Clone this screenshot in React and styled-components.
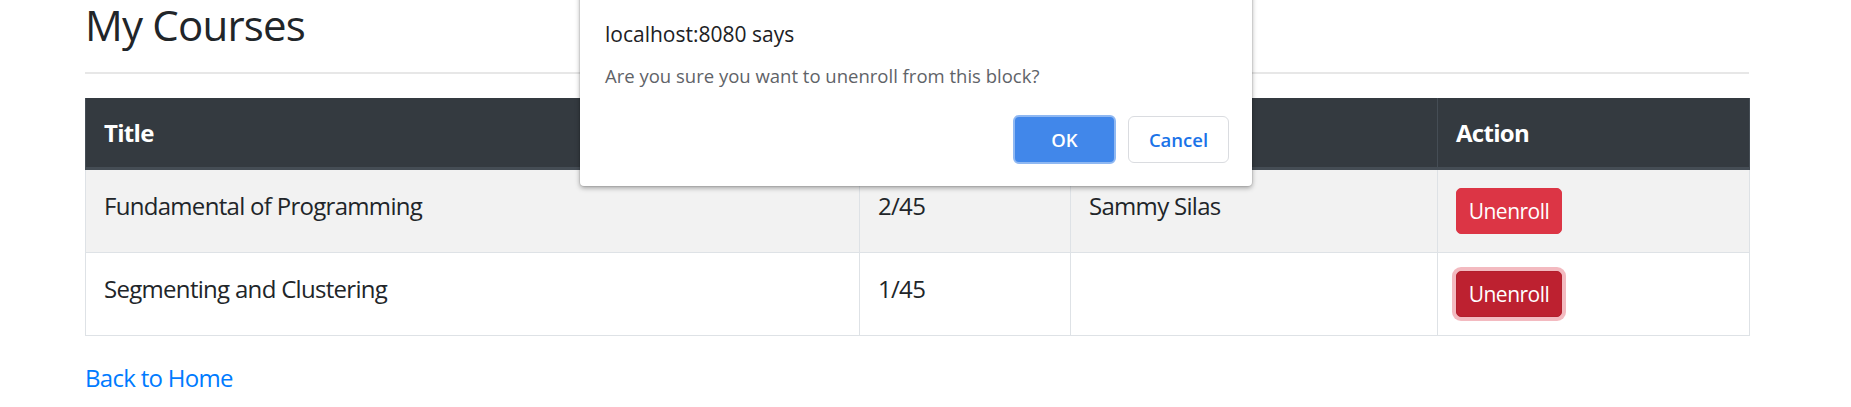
import React from "react";
import styled, { createGlobalStyle } from "styled-components";

const GlobalStyle = createGlobalStyle`
  html, body { margin: 0; padding: 0; background: #fff; }
  body {
    font-family: "Open Sans", "Noto Sans", sans-serif;
    color: #212529;
    font-size: 24px;
    line-height: 36px;
    letter-spacing: -0.7px;
  }
  * { box-sizing: border-box; }
`;

const Page = styled.div`
  width: 1851px;
  min-height: 407px;
  position: relative;
  overflow: hidden;
`;

const Container = styled.main`
  margin-left: 85px;
  width: 1664px;
  display: flex;
  flex-direction: column;
`;

const Heading = styled.h3`
  margin: 0;
  font-size: 42px;
  line-height: 50px;
  font-weight: 500;
  letter-spacing: -0.8px;
  color: #212529;
`;

const Divider = styled.hr`
  margin: 22px 0 24px;
  border: 0;
  height: 2px;
  background: #e7e7e7;
`;

const Table = styled.table`
  width: 100%;
  border-collapse: collapse;
  table-layout: fixed;
  margin-bottom: 24px;
`;

const HeadCell = styled.th`
  background: #343a40;
  color: #fff;
  font-weight: 700;
  text-align: left;
  padding: 18px;
  line-height: 33px;
  border-left: 1px solid #454d55;
  border-right: 1px solid #454d55;
  border-bottom: 3px solid #454d55;
  vertical-align: bottom;
`;

const Row = styled.tr`
  background: ${(p) => (p.$striped ? "#f2f2f2" : "#fff")};
`;

const Cell = styled.td`
  padding: 18px;
  border: 1px solid #dee2e6;
  vertical-align: top;
  line-height: 36px;
  height: 83px;
`;

const DangerButton = styled.button`
  display: inline-flex;
  align-items: center;
  justify-content: center;
  width: 106px;
  height: 46px;
  padding: 0 12px;
  font-family: inherit;
  font-size: 21px;
  line-height: 31px;
  letter-spacing: -0.5px;
  color: #fff;
  background: ${(p) => (p.$active ? "#bd2130" : "#dc3545")};
  border: 1.5px solid ${(p) => (p.$active ? "#b21f2d" : "#dc3545")};
  border-radius: 5px;
  box-shadow: ${(p) => (p.$active ? "0 0 0 4px rgba(225, 83, 97, 0.4)" : "none")};
  cursor: pointer;
`;

const BackLink = styled.a`
  color: #007bff;
  text-decoration: none;
  font-size: 24px;
  line-height: 36px;
  align-self: flex-start;
`;

const Dialog = styled.div`
  position: absolute;
  left: 580px;
  top: -10px;
  width: 672px;
  padding: 30px 23px 22px 25px;
  background: #fff;
  border-radius: 4px;
  letter-spacing: 0;
  box-shadow: 0 2px 5px rgba(0, 0, 0, 0.35), 0 0 0 1px rgba(0, 0, 0, 0.06);
  display: flex;
  flex-direction: column;
`;

const DialogTitle = styled.div`
  font-size: 21px;
  line-height: 28px;
  color: #202124;
`;

const DialogMessage = styled.div`
  margin-top: 15px;
  font-size: 18.5px;
  line-height: 26px;
  color: #5f6368;
`;

const DialogActions = styled.div`
  margin-top: 26px;
  display: flex;
  justify-content: flex-end;
  align-items: center;
  gap: 12px;
`;

const DialogButton = styled.button`
  font-family: inherit;
  font-size: 18.5px;
  font-weight: 600;
  border-radius: 6px;
  cursor: pointer;
  width: ${(p) => (p.$primary ? "103px" : "101px")};
  height: ${(p) => (p.$primary ? "49px" : "47px")};
  color: ${(p) => (p.$primary ? "#fff" : "#1a73e8")};
  background: ${(p) => (p.$primary ? "#4187ea" : "#fff")};
  border: ${(p) => (p.$primary ? "2px solid #8fb8f2" : "1.5px solid #dadce0")};
`;

const courses = [
  { title: "Fundamental of Programming", seats: "2/45", lecturer: "Sammy Silas" },
  { title: "Segmenting and Clustering", seats: "1/45", lecturer: "" },
];

export default function App() {
  return (
    <Page>
      <GlobalStyle />
      <Container>
        <Heading>My Courses</Heading>
        <Divider />
        <Table>
          <colgroup>
            <col style={{ width: 774 }} />
            <col style={{ width: 211 }} />
            <col style={{ width: 367 }} />
            <col style={{ width: 312 }} />
          </colgroup>
          <thead>
            <tr>
              <HeadCell>Title</HeadCell>
              <HeadCell>Seats</HeadCell>
              <HeadCell>Lecturer</HeadCell>
              <HeadCell>Action</HeadCell>
            </tr>
          </thead>
          <tbody>
            {courses.map((c, i) => (
              <Row key={c.title} $striped={i % 2 === 0}>
                <Cell>{c.title}</Cell>
                <Cell>{c.seats}</Cell>
                <Cell>{c.lecturer}</Cell>
                <Cell>
                  <DangerButton $active={i === 1}>Unenroll</DangerButton>
                </Cell>
              </Row>
            ))}
          </tbody>
        </Table>
        <BackLink href="#">Back to Home</BackLink>
      </Container>
      <Dialog role="alertdialog">
        <DialogTitle>localhost:8080 says</DialogTitle>
        <DialogMessage>Are you sure you want to unenroll from this block?</DialogMessage>
        <DialogActions>
          <DialogButton $primary>OK</DialogButton>
          <DialogButton>Cancel</DialogButton>
        </DialogActions>
      </Dialog>
    </Page>
  );
}
